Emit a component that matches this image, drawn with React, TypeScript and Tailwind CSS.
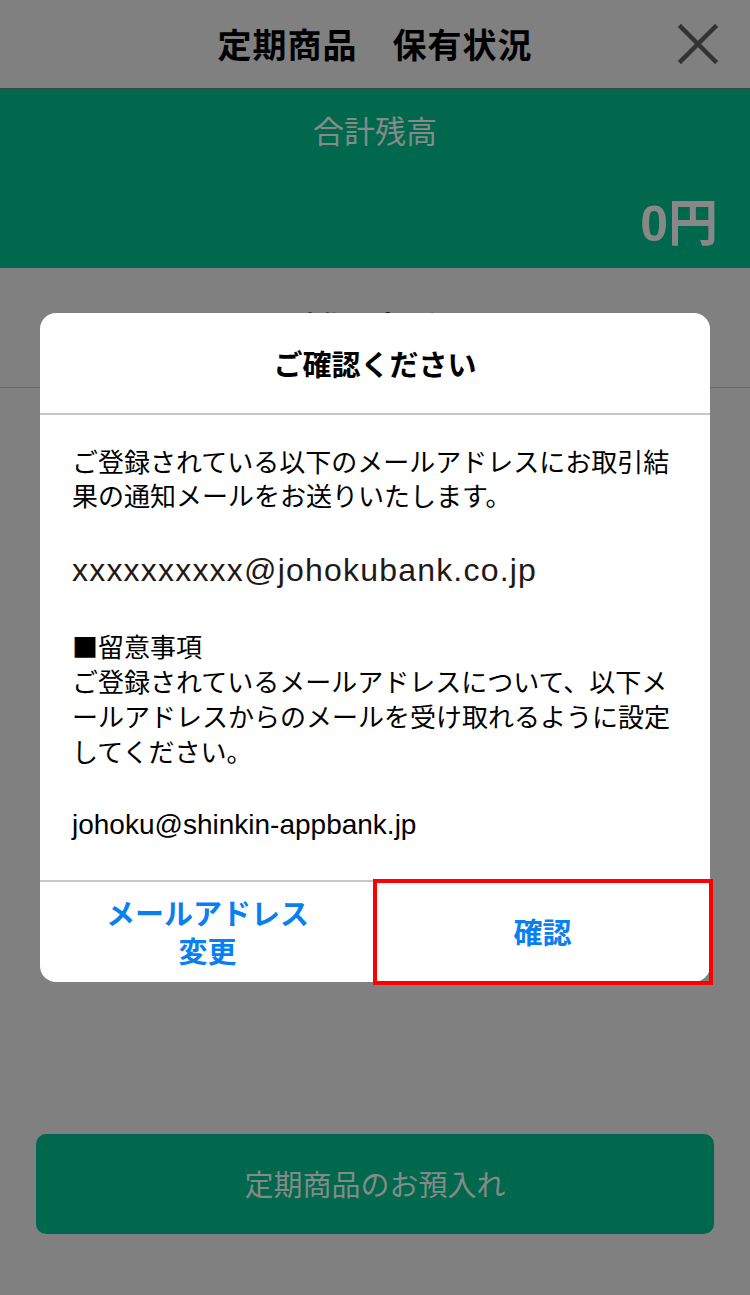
import React from 'react';

function CloseIcon() {
  return (
    <svg width="40" height="40" viewBox="0 0 40 40" className="text-[#333333]">
      <path d="M3 3 L37 37 M37 3 L3 37" stroke="currentColor" strokeWidth="4.5" strokeLinecap="square" />
    </svg>
  );
}

export default function App() {
  return (
    <div className="relative w-[750px] h-[1295px] bg-[#808080] overflow-hidden font-['Noto_Sans_CJK_JP',sans-serif]">
      {/* page behind the dialog */}
      <div className="relative h-[89px] flex items-center justify-center border-b border-[#2d4a40]">
        <h1 className="text-[34px] leading-none font-bold text-black tracking-[1px]">定期商品　保有状況</h1>
        <button className="absolute right-[32px] top-[24px]">
          <CloseIcon />
        </button>
      </div>

      <div className="h-[179px] bg-[#00684c] flex flex-col px-[32px] pt-[20px]">
        <div className="text-center text-[31px] leading-[42px] text-[#868a88]">合計残高</div>
        <div className="mt-auto mb-[14px] text-right text-[50px] leading-[60px] font-bold text-[#888888]">
          <span className="font-['Liberation_Sans',sans-serif]">0</span>円
        </div>
      </div>

      <div className="h-[120px] border-b border-[#6a6a6a] flex justify-center pt-[43px]">
        <span className="text-[26px] font-bold text-black leading-none">定期預金明細</span>
      </div>

      <div className="px-[36px] pt-[746px]">
        <button className="w-full h-[100px] rounded-[10px] bg-[#00684c] text-[29px] text-[#858a88]">
          定期商品のお預入れ
        </button>
      </div>

      {/* dialog */}
      <div className="absolute left-[40px] top-[313px] w-[670px] bg-white rounded-[16px] overflow-hidden">
        <div className="h-[100px] flex items-center justify-center">
          <h2 className="text-[29px] font-bold text-black leading-none">ご確認ください</h2>
        </div>
        <div className="h-[2px] bg-[#c8c8c8]" />

        <div className="px-[32px] pt-[31px] pb-[38px] text-black font-['Liberation_Sans','Noto_Sans_CJK_JP',sans-serif]">
          <p className="text-[26px] leading-[34px]">
            ご登録されている以下のメールアドレスにお取引結果の通知メールをお送りいたします。
          </p>
          <p className="mt-[36px] text-[32px] leading-[40px] text-[#231815] tracking-[1.2px]">
            xxxxxxxxxx@johokubank.co.jp
          </p>
          <p className="mt-[38px] text-[26px] leading-[35px]">
            <span className="font-['Noto_Sans_CJK_JP',sans-serif]">■</span>留意事項
            <br />
            ご登録されているメールアドレスについて、以下メールアドレスからのメールを受け取れるように設定してください。
          </p>
          <p className="mt-[37px] text-[28px] leading-[34px]">johoku@shinkin-appbank.jp</p>
        </div>

        <div className="h-[2px] bg-[#c8c8c8]" />
        <div className="grid grid-cols-2 h-[100px] text-[#0a7ff2] font-bold text-[29px] leading-[38px]">
          <button className="flex items-center justify-center text-center pb-[2px]">
            メールアドレス
            <br />
            変更
          </button>
          <button className="flex items-center justify-center pb-[2px]">確認</button>
        </div>
      </div>

      {/* highlight annotation */}
      <div className="absolute left-[373px] top-[879px] w-[340px] h-[106px] border-[4px] border-[#ff0000] pointer-events-none" />
    </div>
  );
}
